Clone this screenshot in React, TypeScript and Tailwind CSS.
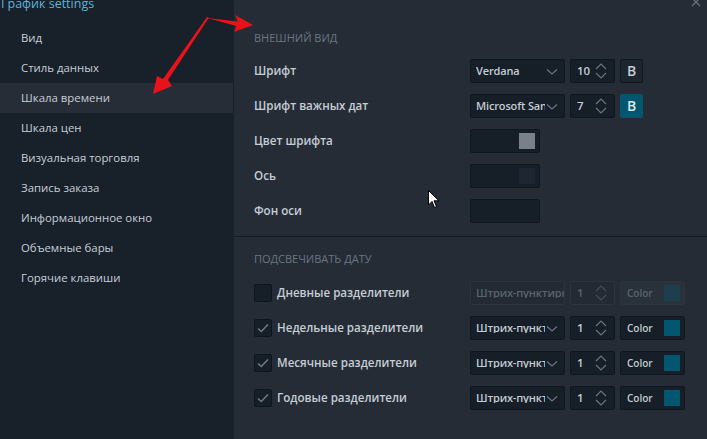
import React from "react";

const font = { fontFamily: '"Open Sans", "Noto Sans", sans-serif' };

const menu = [
  "Вид",
  "Стиль данных",
  "Шкала времени",
  "Шкала цен",
  "Визуальная торговля",
  "Запись заказа",
  "Информационное окно",
  "Объемные бары",
  "Горячие клавиши",
];

function Chevron() {
  return (
    <svg width="12" height="8" viewBox="0 0 12 8" className="absolute right-[6px] top-[8px]">
      <path d="M1 1.5 L6 6 L11 1.5" fill="none" stroke="#6b7480" strokeWidth="1.2" />
    </svg>
  );
}

function Spinner({ dim = false }: { dim?: boolean }) {
  const c = dim ? "#454d57" : "#6b7480";
  return (
    <svg width="12" height="18" viewBox="0 0 12 18" className="shrink-0">
      <path d="M1 7 L6 2 L11 7" fill="none" stroke={c} strokeWidth="1.2" />
      <path d="M1 11 L6 16 L11 11" fill="none" stroke={c} strokeWidth="1.2" />
    </svg>
  );
}

function Select({ text, dim = false }: { text: string; dim?: boolean }) {
  return (
    <div
      className={`relative w-[95px] h-[24px] flex items-center pl-[5px] rounded-[2px] border ${
        dim ? "border-[#2c343e] bg-[#232a33] text-[#5a636d]" : "border-[#10161d] bg-[#161e27] text-[#c3cbd3]"
      } overflow-hidden`}
    >
      <span
        className={`${dim ? "w-[88px]" : "w-[69px]"} whitespace-nowrap overflow-hidden text-[11px] tracking-[-0.15px] font-semibold leading-none`}
      >
        {text}
      </span>
      {!dim && <Chevron />}
    </div>
  );
}

function NumInput({ v, dim = false }: { v: string; dim?: boolean }) {
  return (
    <div
      className={`w-[45px] h-[24px] flex items-center pl-[6px] pr-[7px] rounded-[2px] border ${
        dim ? "border-[#2c343e] bg-[#232a33] text-[#5a636d]" : "border-[#10161d] bg-[#161e27] text-[#c3cbd3]"
      }`}
    >
      <span className="flex-1 text-[11.5px] font-semibold leading-none">{v}</span>
      <Spinner dim={dim} />
    </div>
  );
}

function BoldBtn({ active = false }: { active?: boolean }) {
  return (
    <div
      className={`w-[23px] h-[24px] flex items-center justify-center rounded-[2px] border text-[14px] font-semibold ${
        active ? "bg-[#02566f] border-[#02566f] text-[#dfe8ee]" : "bg-[#1d252e] border-[#10161d] text-[#c3cbd3]"
      }`}
    >
      B
    </div>
  );
}

function ColorBox({ swatch }: { swatch?: string }) {
  return (
    <div className="w-[70px] h-[24px] flex items-center justify-end pr-[4px] rounded-[2px] border border-[#10161d] bg-[#161e27]">
      {swatch && <div className="w-[16px] h-[16px]" style={{ background: swatch }} />}
    </div>
  );
}

function ColorLabelBox({ dim = false }: { dim?: boolean }) {
  return (
    <div
      className={`w-[65px] h-[24px] flex items-center justify-between pl-[6px] pr-[4px] rounded-[2px] border ${
        dim ? "border-[#2c343e] bg-[#29313a] text-[#5a636d]" : "border-[#10161d] bg-[#161e27] text-[#c3cbd3]"
      }`}
    >
      <span className="text-[10px] font-semibold leading-none">Color</span>
      <div className={`w-[16px] h-[16px] ${dim ? "bg-[#1f3e4c]" : "bg-[#02566f]"}`} />
    </div>
  );
}

function Check({ on }: { on: boolean }) {
  return (
    <div className="w-[18px] h-[18px] rounded-[2px] border border-[#0f151c] bg-[#161e27] flex items-center justify-center">
      {on && (
        <svg width="12" height="10" viewBox="0 0 12 10">
          <path d="M1 5.5 L4.3 8.5 L11 1.5" fill="none" stroke="#6f7882" strokeWidth="1.6" />
        </svg>
      )}
    </div>
  );
}

const labelCls = "text-[11.6px] font-semibold text-[#c5cdd5] whitespace-nowrap";

export default function App() {
  return (
    <div className="relative w-[707px] h-[439px] overflow-hidden flex bg-[#252c36]" style={font}>
      {/* Sidebar */}
      <div className="w-[234px] h-full bg-[#18202a] flex flex-col">
        <div className="h-[29px] -mt-[6px] ml-[1px] text-[12.5px] text-[#59b6db] leading-[20px] whitespace-nowrap">
          График settings
        </div>
        <div className="flex flex-col">
          {menu.map((m, i) => (
            <div
              key={m}
              className={`h-[30px] flex items-center pl-[21px] text-[11.4px] text-[#c6ced6] whitespace-nowrap ${
                i === 2 ? "bg-[#262d37] mr-[1px]" : ""
              }`}
            >
              {m}
            </div>
          ))}
        </div>
      </div>

      {/* Main panel */}
      <div className="flex-1 h-full flex flex-col">
        <div className="pl-[20px] pt-[30px]">
          <div className="h-[16px] flex items-center text-[11px] text-[#6b7580] uppercase">Внешний вид</div>
          <div className="mt-[7px] flex flex-col">
            <div className="h-[35px] flex items-center">
              <div className={`w-[216px] ${labelCls}`}>Шрифт</div>
              <div className="flex gap-[5px]">
                <Select text="Verdana" />
                <NumInput v="10" />
                <BoldBtn />
              </div>
            </div>
            <div className="h-[35px] flex items-center">
              <div className={`w-[216px] ${labelCls}`}>Шрифт важных дат</div>
              <div className="flex gap-[5px]">
                <Select text="Microsoft Sans Serif" />
                <NumInput v="7" />
                <BoldBtn active />
              </div>
            </div>
            <div className="h-[35px] flex items-center">
              <div className={`w-[216px] ${labelCls}`}>Цвет шрифта</div>
              <ColorBox swatch="#7a8089" />
            </div>
            <div className="h-[35px] flex items-center">
              <div className={`w-[216px] ${labelCls}`}>Ось</div>
              <ColorBox swatch="#1e2731" />
            </div>
            <div className="h-[35px] flex items-center">
              <div className={`w-[216px] ${labelCls}`}>Фон оси</div>
              <ColorBox />
            </div>
          </div>
        </div>
        <div className="mt-[8px] h-[1px] bg-[#141a21]" />
        <div className="pl-[20px] pt-[14px]">
          <div className="h-[16px] flex items-center text-[11px] text-[#6b7580] uppercase">Подсвечивать дату</div>
          <div className="mt-[8px] flex flex-col">
            {[
              { l: "Дневные разделители", on: false, dim: true },
              { l: "Недельные разделители", on: true, dim: false },
              { l: "Месячные разделители", on: true, dim: false },
              { l: "Годовые разделители", on: true, dim: false },
            ].map((r) => (
              <div key={r.l} className="h-[35px] flex items-center">
                <div className="w-[216px] flex items-center gap-[5px]">
                  <Check on={r.on} />
                  <span className={labelCls}>{r.l}</span>
                </div>
                <div className="flex gap-[5px]">
                  <Select text="Штрих-пунктирная" dim={r.dim} />
                  <NumInput v="1" dim={r.dim} />
                  <ColorLabelBox dim={r.dim} />
                </div>
              </div>
            ))}
          </div>
        </div>
      </div>

      {/* Close X */}
      <svg className="absolute left-[691px] top-[-3px]" width="10" height="10" viewBox="0 0 10 10">
        <path d="M1 1 L9 9 M9 1 L1 9" stroke="#6b7580" strokeWidth="1.2" />
      </svg>

      {/* Red annotation arrows */}
      <svg className="absolute left-0 top-0 pointer-events-none" width="707" height="439" viewBox="0 0 707 439">
        <path d="M207 18 L238 21.5 L235 15 L253 25 L234 32 L236.5 26 Z" fill="#e8121a" />
        <path d="M209 17.5 L168 80 L172 86 L153 94 L157 76 L163 79 L207 17 Z" fill="#e8121a" />
      </svg>

      {/* Mouse cursor */}
      <svg className="absolute left-[428px] top-[190px]" width="12" height="19" viewBox="0 0 12 19">
        <path d="M0.5 0.5 L0.5 15 L4 11.5 L6.5 17.5 L8.5 16.5 L6 10.8 L11 10.8 Z" fill="#ffffff" stroke="#000000" strokeWidth="1" />
      </svg>
    </div>
  );
}
